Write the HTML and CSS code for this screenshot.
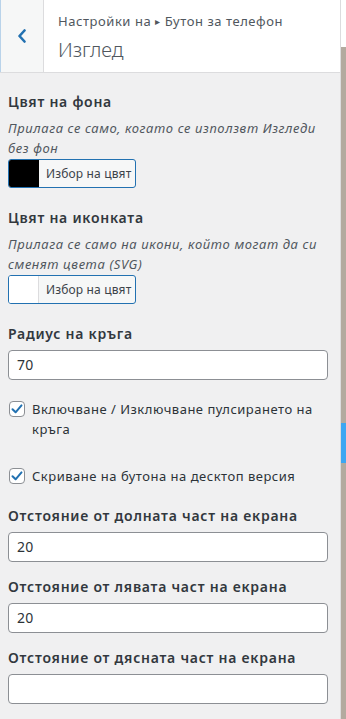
FILE: index.html
```html
<!DOCTYPE html>
<html lang="bg">
<head>
<meta charset="utf-8">
<title>Изглед</title>
<link rel="stylesheet" href="styles.css">
</head>
<body>
<div class="layout">
  <div class="panel">
    <header class="head">
      <div class="back">
        <svg width="10" height="14" viewBox="0 0 10 14"><path d="M7.5 1.5 L2.5 7 L7.5 12.5" fill="none" stroke="#2271b1" stroke-width="2.6" stroke-linecap="round" stroke-linejoin="round"/></svg>
      </div>
      <div class="titles">
        <div class="crumb">Настройки на <span class="tri">▸</span> Бутон за телефон</div>
        <div class="section">Изглед</div>
      </div>
    </header>
    <main class="body">
      <div class="control color-ctl">
        <div class="ctitle">Цвят на фона</div>
        <div class="desc">Прилага се само, когато се използвт Изгледи без фон</div>
        <div class="picker"><span class="swatch black"></span><span class="pick-label">Избор на цвят</span></div>
      </div>
      <div class="control color-ctl">
        <div class="ctitle">Цвят на иконката</div>
        <div class="desc">Прилага се само на икони, който могат да си сменят цвета (SVG)</div>
        <div class="picker"><span class="swatch white"></span><span class="pick-label">Избор на цвят</span></div>
      </div>
      <div class="control">
        <div class="ctitle">Радиус на кръга</div>
        <div class="input">70</div>
      </div>
      <div class="control check-ctl">
        <span class="box"><svg width="14" height="14" viewBox="0 0 14 14"><path d="M2.5 7.2 L5.6 10.3 L11.5 3.4" fill="none" stroke="#2271b1" stroke-width="2" stroke-linecap="round" stroke-linejoin="round"/></svg></span>
        <span class="clabel">Включване / Изключване пулсирането на кръга</span>
      </div>
      <div class="control check-ctl second">
        <span class="box"><svg width="14" height="14" viewBox="0 0 14 14"><path d="M2.5 7.2 L5.6 10.3 L11.5 3.4" fill="none" stroke="#2271b1" stroke-width="2" stroke-linecap="round" stroke-linejoin="round"/></svg></span>
        <span class="clabel">Скриване на бутона на десктоп версия</span>
      </div>
      <div class="control after-check">
        <div class="ctitle">Отстояние от долната част на екрана</div>
        <div class="input">20</div>
      </div>
      <div class="control">
        <div class="ctitle">Отстояние от лявата част на екрана</div>
        <div class="input">20</div>
      </div>
      <div class="control">
        <div class="ctitle">Отстояние от дясната част на екрана</div>
        <div class="input"></div>
      </div>
    </main>
  </div>
  <div class="preview">
    <div class="pv-top"></div>
    <div class="pv-a"></div>
    <div class="pv-blue"></div>
    <div class="pv-b"></div>
  </div>
</div>
</body>
</html>
```
FILE: styles.css
```css
* { box-sizing: border-box; }
html, body { margin: 0; padding: 0; }
body {
  font-family: "Noto Sans", "Open Sans", "Liberation Sans", sans-serif;
  background: #f0f0f1;
  color: #2c3338;
  width: 346px;
  height: 719px;
  overflow: hidden;
}
.layout { display: flex; height: 719px; }
.panel {
  width: 341px;
  border-right: 1px solid #dcdcde;
  background: #f0f0f1;
  display: flex;
  flex-direction: column;
}
.head {
  height: 73px;
  background: #fff;
  border-bottom: 1px solid #dcdcde;
  display: flex;
}
.back {
  width: 44px;
  background: #f6f7f7;
  border-left: 1px solid #b9d3ea;
  border-right: 1px solid #dcdcde;
  display: flex;
  align-items: center;
  justify-content: center;
  padding-bottom: 1px;
}
.titles { padding: 11px 0 0 14px; }
.crumb { font-size: 13px; line-height: 20px; color: #50575e; letter-spacing: 0.55px; }
.tri { font-size: 10px; position: relative; top: -1px; }
.section { font-size: 20px; font-weight: 300; line-height: 28px; color: #50575e; margin-top: 4px; }
.body { padding: 17px 13px 0 8px; }
.control { margin-bottom: 13px; }
.color-ctl { margin-bottom: 18px; }
.ctitle { font-size: 14px; font-weight: 600; line-height: 24px; color: #32383e; margin-bottom: 4px; letter-spacing: 0.75px; }
.desc { font-size: 13px; font-style: italic; line-height: 20px; color: #50575e; margin-bottom: 1px; letter-spacing: 0.6px; }
.picker {
  width: 128px; height: 29px;
  border: 1px solid #2271b1;
  border-radius: 3px;
  display: flex;
  overflow: hidden;
  background: #f6f7f7;
}
.swatch { width: 30px; border-right: 1px solid #dcdcde; }
.swatch.black { background: #000; border-right-color: #000; }
.swatch.white { background: #fff; }
.pick-label { font-size: 12px; line-height: 27px; padding-left: 7px; color: #3c434a; letter-spacing: 0.15px; }
.input {
  height: 30px;
  width: 320px;
  border: 1px solid #8c8f94;
  border-radius: 4px;
  background: #fff;
  font-size: 14px;
  line-height: 28px;
  padding-left: 8px;
  color: #2c3338;
  letter-spacing: 0.3px;
}
.check-ctl { display: flex; align-items: flex-start; gap: 7px; margin-top: 19px; margin-bottom: 27px; padding-left: 1px; }
.check-ctl.second { margin-top: 0; margin-bottom: 18px; }
.box {
  flex: none;
  width: 16px; height: 16px;
  margin-top: 2px;
  border: 1px solid #8c8f94;
  border-radius: 4px;
  background: #fff;
  display: flex; align-items: center; justify-content: center;
}
.clabel { font-size: 13px; line-height: 20px; color: #2c3338; letter-spacing: 0.5px; }
.preview { flex: 1; display: flex; flex-direction: column; }
.pv-top { height: 47px; background: #fff; }
.pv-a { height: 376px; background: #b3aa9f; }
.pv-blue { height: 40px; background: #3ea6f2; }
.pv-b { flex: 1; background: #b3aa9f; }
```
